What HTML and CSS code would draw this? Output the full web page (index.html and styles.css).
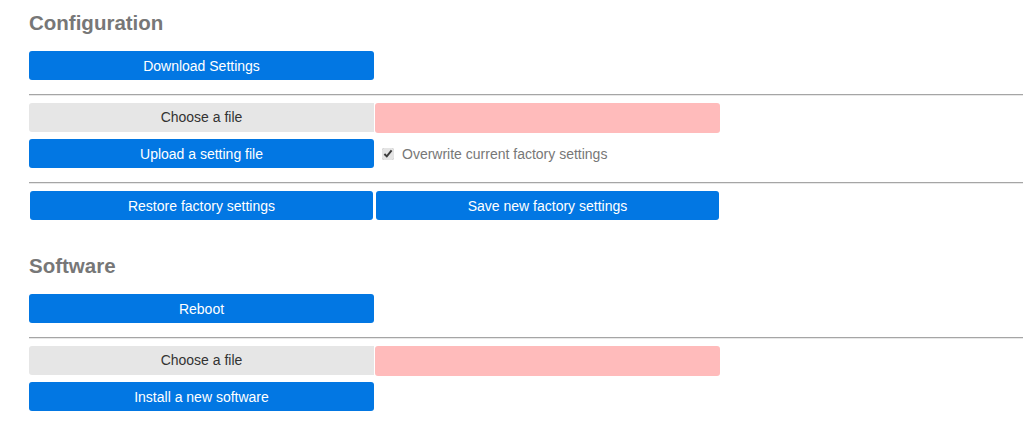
FILE: index.html
```html
<!DOCTYPE html>
<html>
<head>
  <meta charset="utf-8">
  <link rel="stylesheet" href="styles.css">
</head>
<body>
  <div class="page">
    <h2 class="title">Configuration</h2>
    <div class="row">
      <button class="btn">Download Settings</button>
    </div>
    <hr class="sep">
    <div class="row">
      <label class="file">Choose a file</label>
      <div class="filename"></div>
    </div>
    <div class="row">
      <button class="btn">Upload a setting file</button>
      <label class="check"><input type="checkbox" checked> Overwrite current factory settings</label>
    </div>
    <hr class="sep">
    <div class="row">
      <button class="btn pair">Restore factory settings</button>
      <button class="btn pair">Save new factory settings</button>
    </div>

    <h2 class="title second">Software</h2>
    <div class="row">
      <button class="btn">Reboot</button>
    </div>
    <hr class="sep">
    <div class="row">
      <label class="file">Choose a file</label>
      <div class="filename"></div>
    </div>
    <div class="row">
      <button class="btn">Install a new software</button>
    </div>
  </div>
</body>
</html>
```

FILE: styles.css
```css
body { margin:0; font-family:"Liberation Sans", Arial, sans-serif; background:#fff; }
.page { padding-left:29px; }
.title { margin:11px 0 16px; font-size:20.5px; line-height:24px; color:#777; font-weight:bold; }
.second { margin-top:34px; }
.row { display:grid; grid-template-columns:345px 345px; grid-template-rows:29px; column-gap:1px; margin-bottom:7px; }
.btn { height:29px; margin:0; border:0; border-radius:3px; background:#0277e3; color:#fff; font-family:inherit; font-size:14px; padding:0; }
.pair { margin:0 1px; width:343px; }
.file { height:29px; line-height:29px; text-align:center; background:#e6e6e6; color:#333; font-size:14px; border-radius:3px 0 0 3px; }
.filename { height:30px; background:#ffbbbb; border-radius:3px; }
.check { display:flex; align-items:center; color:#777; font-size:14px; padding-left:7px; }
.check input { width:12px; height:12px; margin:0 8px 0 0; accent-color:#e4e4e4; }
.sep { margin:14px 0 7px; border:0; border-top:1px solid #a5a5a5; border-bottom:1px solid #e8e8e8; height:0; }
```
